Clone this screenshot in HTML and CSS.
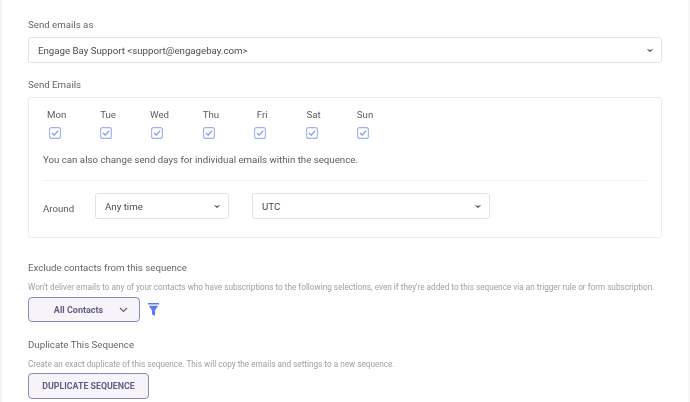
FILE: index.html
```html
<!DOCTYPE html>
<html lang="en">
<head>
<meta charset="utf-8">
<title>Sequence settings</title>
<link rel="stylesheet" href="styles.css">
</head>
<body>
<main class="page">
  <label class="label first">Send emails as</label>
  <div class="select full">
    <span>Engage Bay Support &lt;support@engagebay.com&gt;</span>
    <svg class="caret" viewBox="0 0 8 5" width="8" height="5"><path d="M0.5 1 L4 4 L7.5 1 L4 2 Z"/></svg>
  </div>

  <label class="label second">Send Emails</label>
  <section class="panel">
    <div class="days">
      <div class="day"><span>Mon</span><svg class="check" viewBox="0 0 12 12"><rect x=".6" y=".6" width="10.8" height="10.8" rx="2"/><path d="M3 6 L5.2 8.2 L9.2 3.6"/></svg></div>
      <div class="day"><span>Tue</span><svg class="check" viewBox="0 0 12 12"><rect x=".6" y=".6" width="10.8" height="10.8" rx="2"/><path d="M3 6 L5.2 8.2 L9.2 3.6"/></svg></div>
      <div class="day"><span>Wed</span><svg class="check" viewBox="0 0 12 12"><rect x=".6" y=".6" width="10.8" height="10.8" rx="2"/><path d="M3 6 L5.2 8.2 L9.2 3.6"/></svg></div>
      <div class="day"><span>Thu</span><svg class="check" viewBox="0 0 12 12"><rect x=".6" y=".6" width="10.8" height="10.8" rx="2"/><path d="M3 6 L5.2 8.2 L9.2 3.6"/></svg></div>
      <div class="day"><span>Fri</span><svg class="check" viewBox="0 0 12 12"><rect x=".6" y=".6" width="10.8" height="10.8" rx="2"/><path d="M3 6 L5.2 8.2 L9.2 3.6"/></svg></div>
      <div class="day"><span>Sat</span><svg class="check" viewBox="0 0 12 12"><rect x=".6" y=".6" width="10.8" height="10.8" rx="2"/><path d="M3 6 L5.2 8.2 L9.2 3.6"/></svg></div>
      <div class="day"><span>Sun</span><svg class="check" viewBox="0 0 12 12"><rect x=".6" y=".6" width="10.8" height="10.8" rx="2"/><path d="M3 6 L5.2 8.2 L9.2 3.6"/></svg></div>
    </div>
    <p class="note">You can also change send days for individual emails within the sequence.</p>
    <hr class="rule">
    <div class="around">
      <span class="around-label">Around</span>
      <div class="select time"><span>Any time</span><svg class="caret" viewBox="0 0 8 5" width="8" height="5"><path d="M0.5 1 L4 4 L7.5 1 L4 2 Z"/></svg></div>
      <div class="select zone"><span>UTC</span><svg class="caret" viewBox="0 0 8 5" width="8" height="5"><path d="M0.5 1 L4 4 L7.5 1 L4 2 Z"/></svg></div>
    </div>
  </section>

  <label class="label third">Exclude contacts from this sequence</label>
  <p class="help">Won't deliver emails to any of your contacts who have subscriptions to the following selections, even if they're added to this sequence via an trigger rule or form subscription.</p>
  <div class="contacts-row">
    <button class="btn contacts" type="button">All Contacts
      <svg class="chev" viewBox="0 0 9 6" width="9" height="6"><path d="M1 1 L4.5 4.5 L8 1"/></svg>
    </button>
    <svg class="funnel" viewBox="0 0 11 13" width="11" height="13"><path d="M0 0 H11 V1.6 H0 Z M0.8 2.8 H10.2 L7 7.4 V13 L4 11.2 V7.4 Z"/></svg>
  </div>

  <label class="label fourth">Duplicate This Sequence</label>
  <p class="help help-dup">Create an exact duplicate of this sequence. This will copy the emails and settings to a new sequence.</p>
  <button class="btn duplicate" type="button">DUPLICATE SEQUENCE</button>
</main>
</body>
</html>
```

FILE: styles.css
```css
* { box-sizing: border-box; }
html, body { margin: 0; height: 100%; }
body {
  background: #fff;
  font-family: Roboto, "Liberation Sans", sans-serif;
  color: #555;
  overflow: hidden;
}
.page {
  width: 690px;
  height: 402px;
  padding: 0 26px;
  border-left: 2px solid #f4f4f5;
  border-right: 2px solid #f7f7f8;
  display: flex;
  flex-direction: column;
  align-items: flex-start;
  filter: blur(0.45px);
}
.label { display: block; font-size: 9.7px; line-height: 14px; color: #666; }
.first { margin-top: 18px; }
.second { margin-top: 15px; }
.third { margin-top: 23px; }
.fourth { margin-top: 16px; }
.select {
  display: flex;
  align-items: center;
  justify-content: space-between;
  height: 26px;
  border: 1px solid #e2e2ea;
  border-radius: 3px;
  background: #fff;
  font-size: 9.7px;
  color: #4c4c4c;
  padding: 0 7px 0 9px;
}
.full { width: 634px; margin-top: 5px; }
.caret { fill: #555; flex: none; }
.panel {
  width: 634px;
  height: 141px;
  margin-top: 5px;
  border: 1px solid #ebebf0;
  border-radius: 3px;
  padding: 10px 14px 0;
}
.days { display: flex; margin-left: -14px; }
.day {
  width: 51.4px;
  display: flex;
  flex-direction: column;
  align-items: center;
  gap: 5px;
  font-size: 9.7px;
  line-height: 14px;
  color: #5c5c5c;
}
.day span { margin-left: 4px; }
.check { width: 12px; height: 12px; fill: none; stroke: #9db2ee; stroke-width: 1.1; }
.check path { stroke: #7d96e6; }
.note { margin: 14px 0 0; font-size: 9.7px; line-height: 14px; color: #5c5c5c; }
.rule { margin: 13px 0 0; border: 0; border-top: 1px solid #f3f3f5; height: 0; width: 100%; }
.around { display: flex; align-items: center; margin-top: 12px; }
.around-label { width: 52px; font-size: 9.7px; color: #5c5c5c; padding-top: 4px; }
.time { width: 134px; margin-right: 23px; }
.zone { width: 238px; }
.help { margin: 6px 0 0; font-size: 8.2px; line-height: 12px; color: #a0a0a0; white-space: nowrap; }
.btn {
  display: flex;
  align-items: center;
  justify-content: center;
  font-family: inherit;
  font-weight: 700;
  border: 1.5px solid #8e87b2;
  border-radius: 4px;
  background: #f6f4fa;
  color: #625c82;
  padding: 0;
}
.contacts-row { display: flex; align-items: center; margin-top: 4px; gap: 8px; }
.contacts { width: 112px; height: 25px; font-size: 9px; gap: 16px; padding-left: 14px; }
.chev { fill: none; stroke: #5f5a80; stroke-width: 1.1; }
.funnel { fill: #5b7cf0; }
.help-dup { margin-top: 6px; }
.duplicate { width: 121px; height: 26px; margin-top: 3px; font-size: 8.8px; }
```
